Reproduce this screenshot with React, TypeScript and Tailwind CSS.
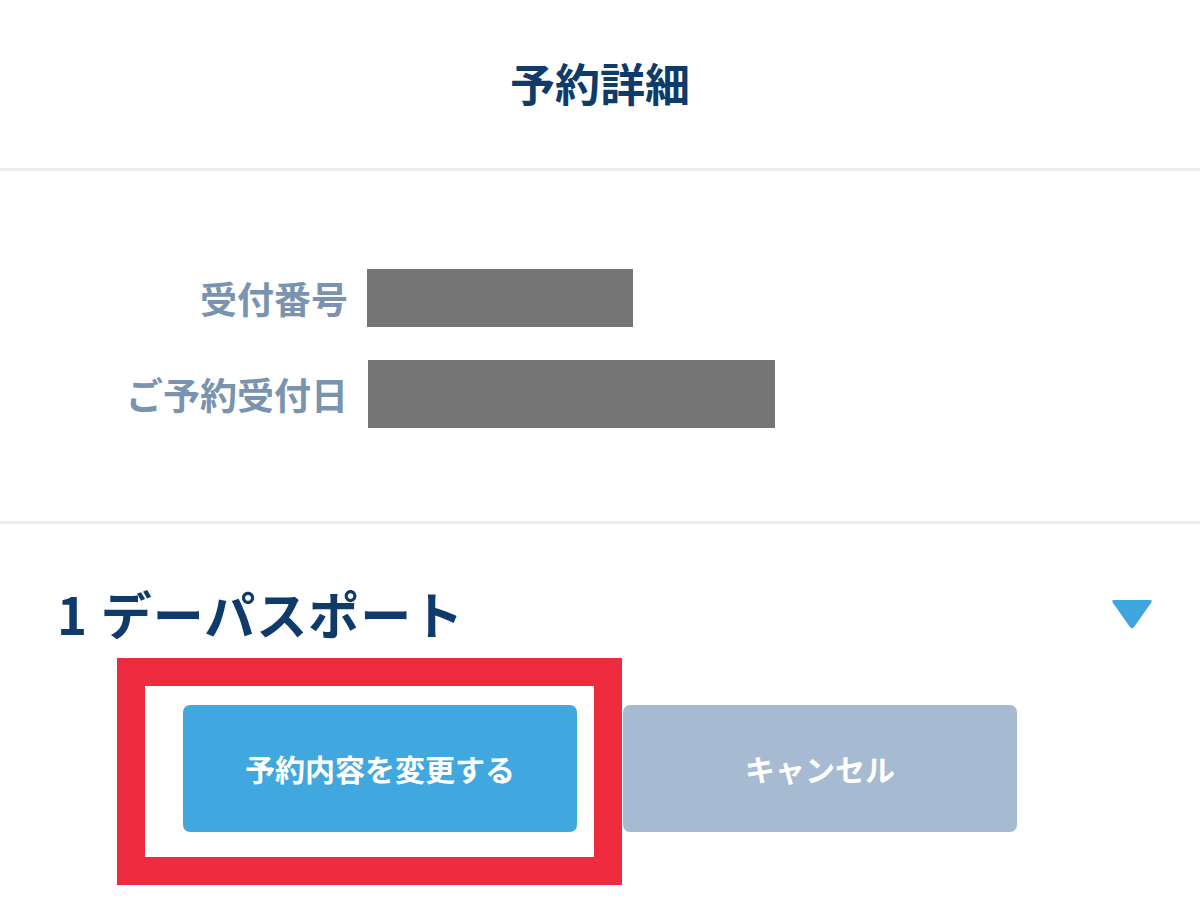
import { useState } from "react";

const font = {
    fontFamily: '"Noto Sans CJK JP", "Noto Sans", sans-serif',
};

export default function App() {
    const [open, setOpen] = useState(true);

    return (
        <div className="w-[1200px] h-[898px] bg-white overflow-hidden" style={font}>
            {/* HEADER */}
            <header className="h-[171px] flex items-center justify-center border-b-[3px] border-[#eeeeee]">
                <h1 className="text-[45px] font-bold text-[#0e3b69] leading-none -mt-[4px]">
                    予約詳細
                </h1>
            </header>

            {/* INFO */}
            <section className="pt-[98px] pb-[93px] border-b-[3px] border-[#eeeeee] flex flex-col gap-[33px]">
                <div className="flex items-center">
                    <div className="w-[348px] text-right text-[37px] font-bold text-[#7a93ae] leading-none">
                        受付番号
                    </div>
                    <div className="ml-[19px] w-[266px] h-[58px] bg-[#757575]" />
                </div>
                <div className="flex items-center">
                    <div className="w-[348px] text-right text-[37px] font-bold text-[#7a93ae] leading-none">
                        ご予約受付日
                    </div>
                    <div className="ml-[20px] w-[407px] h-[68px] bg-[#757575]" />
                </div>
            </section>

            {/* TICKET */}
            <section className="pt-[59px]">
                <button
                    className="w-full flex items-center justify-between pl-[57px] pr-[47px]"
                    onClick={() => setOpen(!open)}
                >
                    <span className="text-[51px] font-bold text-[#0e3b69] leading-[60px] tracking-[1px]">
                        1 デーパスポート
                    </span>
                    <svg width="42" height="32" viewBox="0 0 42 32" className="mt-[2px]">
                        <path d="M3 2 H39 Q42 2 40 5 L23 29 Q21 31.5 19 29 L2 5 Q0 2 3 2 Z" fill="#3ea6dd" />
                    </svg>
                </button>

                <div className="mt-[62px] pl-[183px] flex gap-[46px]">
                    <div className="relative">
                        <div className="absolute -left-[66px] -top-[47px] w-[505px] h-[227px] border-[28px] border-[#ee2b3f]" />
                        <button className="relative w-[394px] h-[127px] rounded-[7px] bg-[#41a7df] text-white text-[30px] font-bold">
                            予約内容を変更する
                        </button>
                    </div>
                    <button className="w-[394px] h-[127px] rounded-[7px] bg-[#a6bbd1] text-white text-[30px] font-bold">
                        キャンセル
                    </button>
                </div>
            </section>
        </div>
    );
}
